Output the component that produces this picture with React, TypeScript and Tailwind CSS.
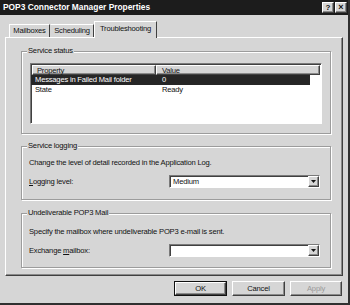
import React from "react";

// raised 3d edge used by buttons and the tab panel
const raised =
	"border border-t-white border-l-white border-r-[#404040] border-b-[#404040] shadow-[inset_-1px_-1px_0_#8a8a8a]";

// etched group box with a caption sitting on the top line
const Group: React.FC<{ title: string; className: string; children: React.ReactNode }> = ({
	title,
	className,
	children,
}) => (
	<div
		className={`relative border border-[#9c9c9c] shadow-[1px_1px_0_#ffffff,inset_1px_1px_0_#ffffff] ${className}`}
	>
		<span className="absolute -top-[6px] left-[5px] bg-[#d6d6d6] px-[1px] leading-[10px]">{title}</span>
		{children}
	</div>
);

// combobox with the little dropdown button
const Combo: React.FC<{ value?: string }> = ({ value }) => (
	<div className="flex h-[13px] w-[151px] border border-t-[#7a7a7a] border-l-[#7a7a7a] border-r-white border-b-white bg-white shadow-[inset_1px_1px_0_#404040]">
		<div className="flex-1 pl-[3px] pt-[1px] leading-[10px]">{value}</div>
		<div className={`flex w-[11px] items-center justify-center bg-[#d6d6d6] ${raised}`}>
			<svg width="5" height="3" viewBox="0 0 5 3">
				<path d="M0 0h5L2.5 3z" fill="#111" />
			</svg>
		</div>
	</div>
);

export default function App() {
	return (
		<div
			className="flex h-[305px] w-[350px] flex-col border-r-2 border-b-2 border-r-[#303030] border-b-[#303030] bg-[#d6d6d6] text-[7.6px] tracking-[-0.2px] text-[#111]"
			style={{ fontFamily: "'Liberation Sans', Arial, sans-serif" }}
		>
			{/* title bar */}
			<div className="flex h-[15px] items-center bg-[#1c1c1c] pl-[3px] pr-[1px] tracking-normal">
				<div className="flex-1 text-[8.4px] font-bold text-white">POP3 Connector Manager Properties</div>
				<div className="flex gap-[1px]">
					<div className={`flex h-[11px] w-[12px] items-center justify-center bg-[#d6d6d6] text-[8px] font-bold leading-none ${raised}`}>
						?
					</div>
					<div className={`flex h-[11px] w-[12px] items-center justify-center bg-[#d6d6d6] text-[9px] font-bold leading-none ${raised}`}>
						×
					</div>
				</div>
			</div>

			{/* tabs */}
			<div className="flex items-end pl-[9px] pt-[6px]">
				<div className="flex h-[13px] w-[41px] items-center justify-center border border-b-0 border-t-white border-l-white border-r-[#404040]">
					Mailboxes
				</div>
				<div className="flex h-[13px] w-[44px] items-center justify-center border border-b-0 border-t-white border-l-transparent border-r-[#404040]">
					Scheduling
				</div>
				<div className="relative z-10 -mb-[1px] flex h-[17px] w-[63px] items-center justify-center border border-b-0 border-t-white border-l-white border-r-[#404040] bg-[#d6d6d6] pb-[2px]">
					Troubleshooting
				</div>
			</div>

			{/* tab panel */}
			<div className={`mx-[5px] flex h-[239px] flex-col pl-[15px] pr-[11px] pt-[13px] ${raised}`}>
				{/* service status */}
				<Group title="Service status" className="h-[83px] px-[8px] pt-[11px]">
					<div className="h-[61px] border border-t-[#7a7a7a] border-l-[#7a7a7a] border-r-white border-b-white bg-white shadow-[inset_1px_1px_0_#404040]">
						<div className="flex h-[11px] w-[289px] pl-[1px] pt-[1px]">
							<div className={`w-[124px] bg-[#d6d6d6] pl-[4px] leading-[9px] ${raised}`}>Property</div>
							<div className={`flex-1 bg-[#d6d6d6] pl-[5px] leading-[9px] ${raised}`}>Value</div>
						</div>
						<div className="flex h-[10px] w-[279px] items-center bg-[#262626] text-white">
							<div className="w-[126px] pl-[4px]">Messages in Failed Mail folder</div>
							<div className="pl-[5px]">0</div>
						</div>
						<div className="flex h-[10px] items-center">
							<div className="w-[126px] pl-[4px]">State</div>
							<div className="pl-[5px]">Ready</div>
						</div>
					</div>
				</Group>

				{/* service logging */}
				<Group title="Service logging" className="mt-[12px] h-[54px] pl-[7px] pr-[10px] pt-[11px]">
					<div className="leading-[10px]">Change the level of detail recorded in the Application Log.</div>
					<div className="mt-[7px] flex items-center">
						<div className="flex-1">
							<span className="underline">L</span>ogging level:
						</div>
						<Combo value="Medium" />
					</div>
				</Group>

				{/* undeliverable mail */}
				<Group title="Undeliverable POP3 Mail" className="mt-[13px] h-[55px] pl-[7px] pr-[10px] pt-[13px]">
					<div className="leading-[10px]">Specify the mailbox where undeliverable POP3 e-mail is sent.</div>
					<div className="mt-[7px] flex items-center">
						<div className="flex-1">
							Exchange <span className="underline">m</span>ailbox:
						</div>
						<Combo />
					</div>
				</Group>
			</div>

			{/* dialog buttons */}
			<div className="mt-[5px] flex justify-end gap-[5px] pr-[6px]">
				<div className="flex h-[15px] w-[53px] items-center justify-center border border-[#111]">
					<div className={`flex h-full w-full items-center justify-center ${raised}`}>OK</div>
				</div>
				<div className={`flex h-[15px] w-[53px] items-center justify-center ${raised}`}>Cancel</div>
				<div className={`flex h-[15px] w-[52px] items-center justify-center text-[#9a9a9a] ${raised}`}>
					Apply
				</div>
			</div>
		</div>
	);
}
